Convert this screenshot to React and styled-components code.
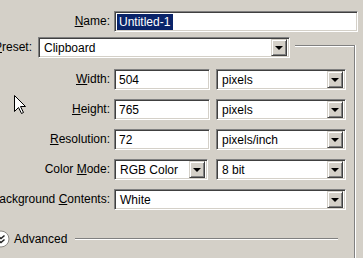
import React from 'react';
import styled, { createGlobalStyle } from 'styled-components';

const GlobalStyle = createGlobalStyle`
  html, body {
    margin: 0;
    padding: 0;
    background: #d4d0c8;
  }
  body {
    font-family: 'Liberation Sans', Arial, sans-serif;
    font-size: 12px;
    color: #000;
  }
`;

const StyledPage = styled.div`
  position: relative;
  width: 363px;
  height: 258px;
  overflow: hidden;
  padding-top: 11px;
  box-sizing: border-box;
`;

const Row = styled.div`
  display: flex;
  align-items: center;
  height: 21px;
`;

const Label = styled.div`
  display: flex;
  justify-content: flex-end;
  flex: none;
  width: ${({ $width }) => $width}px;
  margin-right: ${({ $gap }) => ($gap === undefined ? 4 : $gap)}px;
  white-space: nowrap;
  line-height: 21px;
`;

const Key = styled.span`
  text-decoration: underline;
  text-underline-offset: 1px;
`;

const Field = styled.div`
  flex: none;
  display: flex;
  align-items: center;
  box-sizing: border-box;
  width: ${({ $width }) => $width}px;
  height: 21px;
  margin-left: ${({ $offset }) => $offset || 0}px;
  padding: 0 2px 0 4px;
  background: #fff;
  border: 1px solid;
  border-color: #808080 #fff #fff #808080;
  box-shadow: inset 1px 1px 0 #404040, inset -1px -1px 0 #d4d0c8;
  white-space: nowrap;
  overflow: hidden;
`;

const Selected = styled.span`
  background: #0a246a;
  color: #fff;
  padding: 1px 3px 1px 2px;
  margin-left: -2px;
`;

const FieldText = styled.span`
  flex: 1;
  overflow: hidden;
  padding-left: ${({ $pad }) => $pad || 0}px;
`;

const DropButton = styled.div`
  flex: none;
  display: flex;
  align-items: center;
  justify-content: center;
  box-sizing: border-box;
  width: 16px;
  height: 17px;
  background: #d4d0c8;
  border: 1px solid;
  border-color: #d4d0c8 #404040 #404040 #d4d0c8;
  box-shadow: inset 1px 1px 0 #fff, inset -1px -1px 0 #808080;

  &::after {
    content: '';
    width: 0;
    height: 0;
    border-left: 4px solid transparent;
    border-right: 4px solid transparent;
    border-top: 4px solid #000;
    margin-top: 1px;
  }
`;

const Group = styled.div`
  margin-top: 13px;
  margin-left: -40px;
  width: 395px;
  height: 260px;
  box-sizing: border-box;
  border-top: 1px solid #808080;
  border-right: 1px solid #808080;
  box-shadow: inset 0 1px 0 #fff, 1px 0 0 #fff;
`;

const Legend = styled.div`
  display: flex;
  align-items: center;
  width: max-content;
  height: 21px;
  margin-top: -9px;
  padding-right: 5px;
  background: #d4d0c8;
`;

const FieldList = styled.div`
  display: flex;
  flex-direction: column;
  gap: 9px;
  margin-top: 11px;
`;

const AdvancedRow = styled.div`
  display: flex;
  align-items: center;
  height: 18px;
  margin-top: 20px;
  padding-right: 16px;
`;

const ToggleIcon = styled.svg`
  flex: none;
  margin-left: 32px;
`;

const AdvancedText = styled.span`
  margin-left: 4px;
  white-space: nowrap;
`;

const Etch = styled.div`
  flex: 1;
  height: 0;
  margin-left: 8px;
  border-top: 1px solid #808080;
  border-bottom: 1px solid #fff;
`;

const Cursor = styled.svg`
  position: absolute;
  left: 14px;
  top: 95px;
`;

const Select = ({ width, offset, children }) => (
  <Field $width={width} $offset={offset}>
    <FieldText $pad={1}>{children}</FieldText>
    <DropButton />
  </Field>
);

const LABEL_WIDTH = 150;

const fields = [
  { label: <><Key>W</Key>idth:</>, value: '504', unit: 'pixels' },
  { label: <><Key>H</Key>eight:</>, value: '765', unit: 'pixels' },
  { label: <><Key>R</Key>esolution:</>, value: '72', unit: 'pixels/inch' },
];

const App = () => (
  <>
    <GlobalStyle />
    <StyledPage>
      <Row>
        <Label $width={110}>
          <span><Key>N</Key>ame:</span>
        </Label>
        <Field $width={244}>
          <Selected>Untitled-1</Selected>
        </Field>
      </Row>

      <Group>
        <Legend>
          <Label $width={72} $gap={6}>
            <span><Key>P</Key>reset:</span>
          </Label>
          <Select width={252}>Clipboard</Select>
        </Legend>

        <FieldList>
          {fields.map((f, i) => (
            <Row key={i}>
              <Label $width={LABEL_WIDTH}>
                <span>{f.label}</span>
              </Label>
              <Field $width={96}>{f.value}</Field>
              <Select width={130} offset={6}>{f.unit}</Select>
            </Row>
          ))}
          <Row>
            <Label $width={LABEL_WIDTH}>
              <span>Color <Key>M</Key>ode:</span>
            </Label>
            <Select width={94}>RGB Color</Select>
            <Select width={130} offset={8}>8 bit</Select>
          </Row>
          <Row>
            <Label $width={LABEL_WIDTH}>
              <span>Background <Key>C</Key>ontents:</span>
            </Label>
            <Select width={232}>White</Select>
          </Row>
        </FieldList>

        <AdvancedRow>
          <ToggleIcon width="18" height="18" viewBox="0 0 18 18">
            <circle cx="9" cy="9" r="8" fill="#fff" stroke="#8a8782" />
            <path d="M5.5 5.5 L9 8.5 L12.5 5.5 M5.5 9.5 L9 12.5 L12.5 9.5" fill="none" stroke="#222" strokeWidth="1.5" />
          </ToggleIcon>
          <AdvancedText>Advanced</AdvancedText>
          <Etch />
        </AdvancedRow>
      </Group>

      <Cursor width="13" height="20" viewBox="0 0 13 20">
        <polygon
          points="0.5,0.5 0.5,16.5 4.5,12.5 7.5,18.5 9.5,17.5 6.5,11.5 11.5,11.5"
          fill="#fff"
          stroke="#000"
          strokeWidth="1"
        />
      </Cursor>
    </StyledPage>
  </>
);

export default App;
